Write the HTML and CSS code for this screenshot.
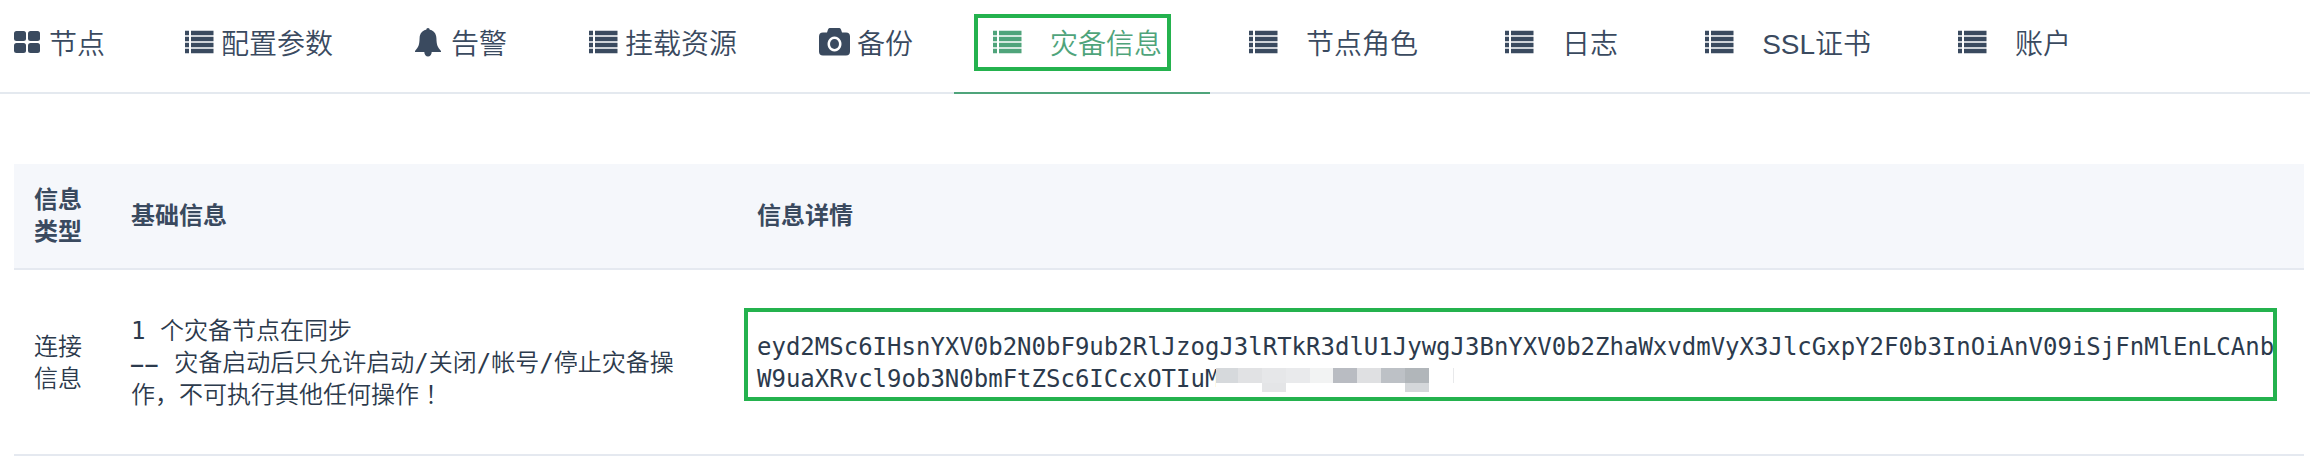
FILE: index.html
```html
<!DOCTYPE html>
<html lang="zh-CN">
<head>
<meta charset="utf-8">
<title>灾备信息</title>
<link rel="stylesheet" href="styles.css">
</head>
<body>
<svg class="defs" width="0" height="0">
  <symbol id="list" viewBox="0 0 29 24"><path d="M0 .7h4v4.500H0zM6 .7h22.500v4.500H6zM0 6.700h4v4.500H0zM6 6.700h22.500v4.500H6zM0 12.700h4v4.500H0zM6 12.700h22.500v4.500H6zM0 18.700h4v4.500H0zM6 18.700h22.500v4.500H6z"/></symbol>
</svg>
<nav class="tabs">
  <a class="tab first"><svg class="icon grid" viewBox="0 0 28 24"><rect x="0" y="1" width="12" height="10" rx="2.5"/><rect x="14" y="1" width="12" height="10" rx="2.5"/><rect x="0" y="13" width="12" height="10" rx="2.5"/><rect x="14" y="13" width="12" height="10" rx="2.5"/></svg><span>节点</span></a>
  <a class="tab"><svg class="icon"><use href="#list"/></svg><span>配置参数</span></a>
  <a class="tab"><svg class="icon bell" viewBox="0 0 26 30"><path d="M13 1c-1 0-1.700.7-1.700 1.800C7.300 3.500 4.800 6.600 4.600 11 4.400 18 3.500 20 0 24v1h9.300c0 2.600 1.700 4.500 3.700 4.500s3.700-1.900 3.700-4.500H26v-1c-3.500-4-4.400-6-4.600-13-.2-4.400-2.700-7.500-6.700-8.200C14.700 1.700 14 1 13 1z"/></svg><span>告警</span></a>
  <a class="tab"><svg class="icon"><use href="#list"/></svg><span>挂载资源</span></a>
  <a class="tab camera-tab"><svg class="icon camera" viewBox="0 0 31 28"><path fill-rule="evenodd" d="M10.500 0h10q1 0 1.500 1.500L23 4.500h4Q31 4.500 31 8.500v15Q31 27.500 27 27.500H4Q0 27.500 0 23.500v-15Q0 4.500 4 4.500h4L9 1.500Q9.500 0 10.500 0zM15.500 8.500a7 7.500 0 1 0 .01 0z"/><ellipse cx="15.500" cy="16" rx="4.500" ry="5"/></svg><span>备份</span></a>
  <a class="tab loose active"><svg class="icon"><use href="#list"/></svg><span>灾备信息</span></a>
  <a class="tab loose"><svg class="icon"><use href="#list"/></svg><span>节点角色</span></a>
  <a class="tab loose"><svg class="icon"><use href="#list"/></svg><span>日志</span></a>
  <a class="tab loose"><svg class="icon"><use href="#list"/></svg><span>SSL证书</span></a>
  <a class="tab loose"><svg class="icon"><use href="#list"/></svg><span>账户</span></a>
</nav>
<main class="table">
  <div class="row head">
    <div class="cell">信息<br>类型</div>
    <div class="cell">基础信息</div>
    <div class="cell">信息详情</div>
  </div>
  <div class="row body">
    <div class="cell">连接<br>信息</div>
    <div class="cell">1 个灾备节点在同步<br><span class="dash">——</span> 灾备启动后只允许启动/关闭/帐号/停止灾备操<br>作，不可执行其他任何操作<span class="mark" lang="zh-TW">！</span></div>
    <div class="cell detail">eyd2MSc6IHsnYXV0b2N0bF9ub2RlJzogJ3lRTkR3dlU1JywgJ3BnYXV0b2ZhaWxvdmVyX3JlcGxpY2F0b3InOiAnV09iSjFnMlEnLCAnb<br>W9uaXRvcl9ob3N0bmFtZSc6ICcxOTIuM
      <svg class="mosaic" width="240" height="24" viewBox="0 0 240 24" shape-rendering="crispEdges">
        <path fill="#fff" d="M0 0h240v24H0z"/>
        <path fill="#d6d9dc" d="M0 0h22v15H0z"/><path fill="#e1e2e4" d="M22 0h24v15H22z"/><path fill="#e6e7e9" d="M46 0h24v15H46z"/><path fill="#e9eaec" d="M70 0h24v15H70z"/><path fill="#f2f3f3" d="M94 0h23v15H94z"/><path fill="#b9bcc2" d="M117 0h24v15h-24z"/><path fill="#dfe0e2" d="M141 0h24v15h-24z"/><path fill="#bdc1c6" d="M165 0h24v15h-24z"/><path fill="#b1b6ba" d="M189 0h24v15h-24z"/>
        <path fill="#e4e5e7" d="M46 15h24v9H46z"/><path fill="#d4d7da" d="M189 15h24v9h-24z"/><path fill="#e8e9eb" d="M237 0h1v15h-1z"/>
      </svg>
    </div>
  </div>
</main>
</body>
</html>
```
FILE: styles.css
```css
*, *::before { box-sizing: border-box; }
body {
  margin: 0;
  width: 2310px;
  height: 456px;
  overflow: hidden;
  background: #fff;
  color: #3a4a5f;
  font-family: "Liberation Sans", "Noto Sans CJK SC", sans-serif;
}
.defs { display: block; height: 0; }
.tabs {
  display: flex;
  height: 94px;
  border-bottom: 2px solid #e4e9ef;
}
.tab {
  display: flex;
  flex: none;
  align-items: center;
  gap: 7px;
  height: 94px;
  padding: 0 43px 8px 39px;
  font-size: 28px;
  font-weight: 350;
  line-height: 40px;
  white-space: nowrap;
  border-bottom: 2px solid transparent;
}
.tab span { padding-top: 6px; }
.first { padding-left: 14px; padding-right: 41px; }
.camera-tab { padding-right: 41px; }
.icon { display: block; flex: none; width: 29px; height: 24px; fill: currentColor; }
.grid { width: 28px; }
.bell { width: 26px; height: 30px; margin-right: 3px; }
.camera { width: 31px; height: 28px; }
.loose { gap: 28px; padding-right: 48px; }
.active {
  position: relative;
  color: #4fa47b;
  border-bottom-color: #4fa47b;
}
.active::before {
  content: "";
  position: absolute;
  left: 20px;
  top: 14px;
  width: 197px;
  height: 57px;
  border: 4px solid #24b24e;
}
.table { margin: 70px 6px 0 14px; }
.row {
  display: grid;
  grid-template-columns: 97px 626px 1fr;
  align-items: center;
  border-bottom: 2px solid #e5e9f0;
}
.cell { padding-left: 20px; font-size: 24px; line-height: 32px; white-space: nowrap; }
.head { height: 106px; background: #f5f7fb; font-weight: 700; }
.body {
  height: 186px;
  padding-top: 2px;
  color: #2c3a4c;
  font-family: "DejaVu Sans Mono", "Noto Sans CJK SC", monospace;
  font-weight: 350;
}
.dash { font-size: 20px; font-weight: 700; letter-spacing: 2.400px; line-height: 1; }
.mark { font-family: "Noto Sans CJK TC", sans-serif; line-height: 1; }
.detail { position: relative; }
.detail::before {
  content: "";
  position: absolute;
  left: 7px;
  top: -23px;
  width: 1533px;
  height: 93px;
  border: 4px solid #24b24e;
}
.mosaic { position: absolute; left: 479px; top: 37px; }
```
